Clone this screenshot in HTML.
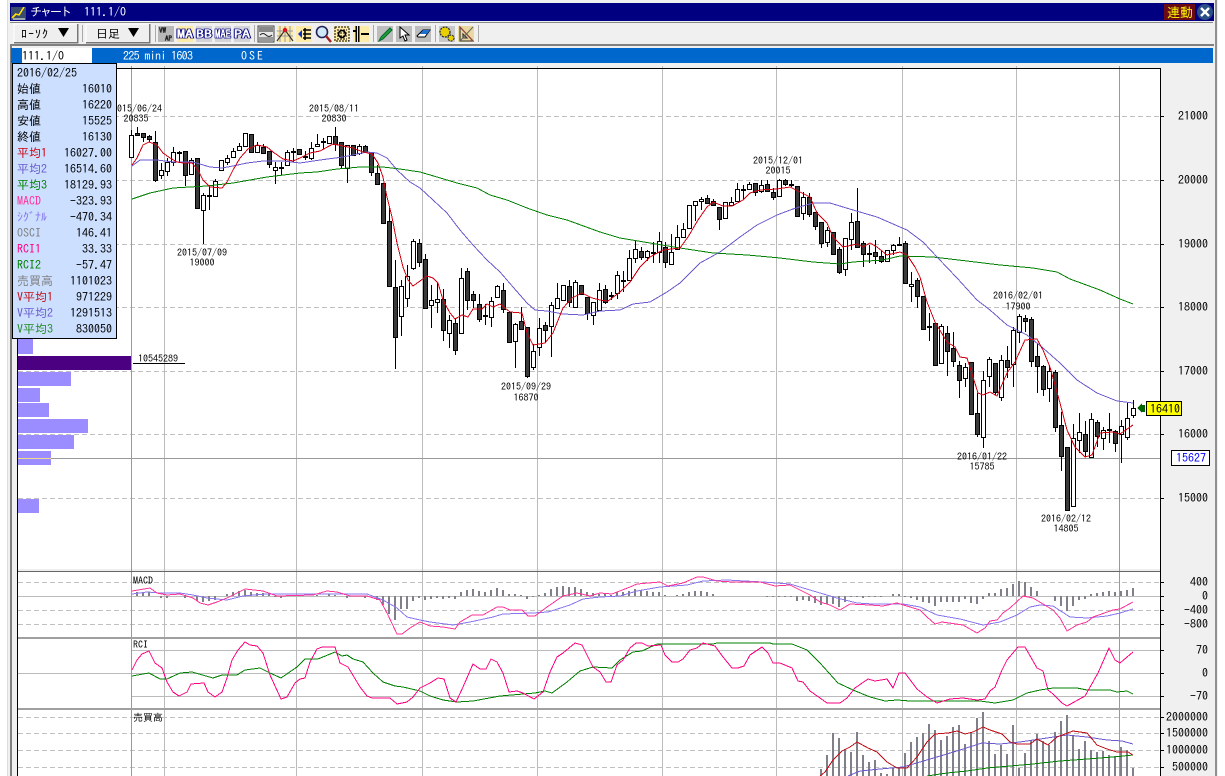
<!DOCTYPE html>
<html lang="ja"><head><meta charset="utf-8"><title>チャート</title>
<style>
html,body{margin:0;padding:0;background:#fff;width:1225px;height:776px;overflow:hidden}
svg{position:absolute;left:0;top:0;display:block}
text{font-family:"IPAGothic","Liberation Mono","Noto Sans CJK JP",monospace}
.c{shape-rendering:crispEdges}
.l{fill:none;stroke-width:1;shape-rendering:crispEdges}
</style></head><body>
<svg width="1225" height="776" viewBox="0 0 1225 776" xmlns="http://www.w3.org/2000/svg">
<!-- window frame -->
<g class="c">
<rect x="0" y="0" width="1225" height="776" fill="#fff"/>
<rect x="7" y="0" width="1211" height="776" fill="#f0f0f0"/>
<rect x="7" y="0" width="1" height="776" fill="#ddd"/>
<rect x="10" y="44" width="2" height="732" fill="#808080"/>
<rect x="1215" y="0" width="2" height="776" fill="#909090"/>
<rect x="10" y="3" width="1204" height="18" fill="#000080"/>
<rect x="10" y="22" width="1203" height="1" fill="#888"/>
<rect x="10" y="44" width="1204" height="2" fill="#808080"/>
<rect x="11" y="48" width="1202" height="15" fill="#0068cc"/>
<rect x="22" y="48" width="70" height="15" fill="#fff"/>
<rect x="18" y="68" width="1142" height="708" fill="#fff"/>
<rect x="18" y="569" width="1142" height="2" fill="#eee"/>
</g>
<!-- title -->
<g class="c">
<rect x="11" y="7" width="15" height="13" fill="#3a4a6a"/>
<path d="M12 18l4-4 3 1 5-8" fill="none" stroke="#ffe000" stroke-width="1.5"/>
<path d="M13 19h12" stroke="#fff"/>
</g>
<text x="30" y="16" font-size="12" fill="#fff" letter-spacing="-2">チャート</text>
<text x="84" y="16" font-size="12" fill="#fff">111.1/O</text>
<rect x="1164" y="4" width="31" height="16" fill="#6a0a14"/>
<text x="1167" y="17" font-size="13" fill="#ffff00">連動</text>
<circle cx="1205" cy="12" r="8" fill="#2c4f86"/>
<path d="M1201 8l8 8M1209 8l-8 8" stroke="#fff" stroke-width="2.4"/>
<!-- toolbar buttons -->
<g class="c">
<rect x="14" y="24" width="64" height="19" fill="#efefef"/>
<path d="M14 42V24H77" fill="none" stroke="#fff"/>
<path d="M77.5 24V42.5H14" fill="none" stroke="#777" stroke-width="1.5"/>
<rect x="86" y="24" width="64" height="19" fill="#efefef"/>
<path d="M86 42V24H149" fill="none" stroke="#fff"/>
<path d="M149.5 24V42.5H86" fill="none" stroke="#777" stroke-width="1.5"/>
<path d="M82.5 25V42M155.5 25V42M254.5 25V42M373.5 25V42M435.5 25V42M478.5 25V42" stroke="#aaa"/>
</g>
<text x="21" y="38" font-size="12" fill="#000" letter-spacing="1">ﾛｰｿｸ</text>
<polygon points="58,28 69,28 63.5,37" fill="#000"/>
<text x="96" y="38" font-size="12" fill="#000">日足</text>
<polygon points="128,28 139,28 133.500,37" fill="#000"/>
<!-- toolbar icons -->
<g class="c">
<rect x="158" y="26" width="16" height="16" fill="#b8b8b8"/>
<rect x="177" y="26" width="16" height="16" fill="#ffeba8"/>
<rect x="196" y="26" width="16" height="16" fill="#d4d4d8"/>
<rect x="215" y="26" width="16" height="16" fill="#d4d4d8"/>
<rect x="234" y="26" width="16" height="16" fill="#d4d4d8"/>
<rect x="258" y="26" width="16" height="16" fill="#e8e8e8" stroke="#444"/>
<rect x="259" y="27" width="14" height="5" fill="#888"/>
<rect x="259" y="37" width="14" height="4" fill="#999"/>
<rect x="277" y="26" width="16" height="16" fill="#ffeba8"/>
<rect x="296" y="26" width="16" height="16" fill="#ffeba8"/>
<rect x="315" y="26" width="16" height="16" fill="#ededed"/>
<rect x="334" y="26" width="16" height="16" fill="#ffeba8"/>
<rect x="353" y="26" width="16" height="16" fill="#ffeba8"/>
<path d="M356 26V42M358.500 26V42" stroke="#000" stroke-width="1.500"/>
<path d="M353 31H356M361 34H369" stroke="#000" stroke-width="2"/>
<rect x="377" y="26" width="16" height="16" fill="#bdbdbd"/>
<rect x="396" y="26" width="16" height="16" fill="#bdbdbd"/>
<rect x="415" y="26" width="16" height="16" fill="#bdbdbd"/>
<rect x="439" y="26" width="16" height="16" fill="#c8c8c8"/>
<rect x="458" y="26" width="16" height="16" fill="#e8d8a0"/>
</g>
<text x="159" y="33" font-size="7" font-weight="bold" fill="#fff" stroke="#222" stroke-width=".3">VW</text>
<text x="165" y="41" font-size="7" font-weight="bold" fill="#fff" stroke="#222" stroke-width=".3">AP</text>
<g font-weight="bold" fill="#fff" stroke="#000080" stroke-width="1.400" paint-order="stroke" font-size="11" lengthAdjust="spacingAndGlyphs">
<text x="177" y="38" textLength="16" lengthAdjust="spacingAndGlyphs">MA</text>
<text x="196" y="38" textLength="16" lengthAdjust="spacingAndGlyphs">BB</text>
<text x="215" y="38" textLength="16" lengthAdjust="spacingAndGlyphs">MAE</text>
<text x="234" y="38" textLength="16" lengthAdjust="spacingAndGlyphs">PA</text>
</g>
<path d="M260 35q3-3 6 0t6 0" fill="none" stroke="#222"/>
<path d="M280 26v16M285 26v16M290 26v16M277 31h16M277 36h16" stroke="#999"/>
<path d="M277 41l8-11 8 11" fill="none" stroke="#333" stroke-width="1.2"/>
<circle cx="285" cy="30" r="2.2" fill="#e01020"/>
<path d="M305 28v12M303 30h8M303 34h8M303 38h8" stroke="#000" stroke-width="1.5"/>
<path d="M298 34l4-4v8z" fill="#1030c0"/>
<circle cx="322" cy="32" r="5.5" fill="#cfe8f8" stroke="#225" stroke-width="1.6"/>
<path d="M326 36l5 6" stroke="#a02020" stroke-width="2.4"/>
<path d="M335 27h14v14h-14zM337 30h10M337 33h10M337 36h10M337 39h10" fill="none" stroke="#000" stroke-dasharray="2 1"/>
<circle cx="342" cy="34" r="3.500" fill="none" stroke="#000" stroke-width="1.600"/>
<path d="M379 41l2-4 9-9 2 2-9 9z" fill="#20a030" stroke="#063"/>
<path d="M400 27v11l3-2 2 5 2-1-2-5h4z" fill="#fff" stroke="#000"/>
<path d="M417 36l6-6h7l-5 7h-7z" fill="#fff" stroke="#000"/>
<path d="M423 30h7l-3 4h-7z" fill="#2070d0"/>
<circle cx="445" cy="32" r="5" fill="#e8d000" stroke="#333" stroke-width="1.4" stroke-dasharray="2 1"/>
<circle cx="451" cy="38" r="3" fill="#e8d000" stroke="#333" stroke-width="1.2" stroke-dasharray="2 1"/>
<path d="M460 27v14h13zM463 34v4h4z" fill="none" stroke="#333" stroke-width="1.1"/>
<path d="M460 27l13 14" stroke="#a04040"/>
<path d="M473 27L460 41" stroke="#666"/>
<!-- blue bar text -->
<text x="22" y="60" font-size="12" fill="#000">111.1/O</text>
<text x="123" y="60" font-size="12" fill="#fff" textLength="70">225 mini 1603</text>
<text x="241" y="60" font-size="12" fill="#fff" textLength="22">OSE</text>
<!-- grid -->
<g class="c" fill="none">
<path d="M18 116.500H1160M18 180.500H1160M18 244.500H1160M18 307.500H1160M18 371.500H1160M18 434.500H1160M18 498.500H1160M18 582.500H1160M18 610.500H1160M18 624.500H1160M18 717.500H1160M18 733.500H1160M18 750.500H1160M18 767.500H1160" stroke="#c0c0c0" stroke-dasharray="5 3"/>
<path d="M18 596.500H1160M131 650.500H1160M18 673.500H1160M131 696.500H1160" stroke="#bbb"/>
<path d="M164.500 66V776M296.500 66V776M422.500 66V776M537.500 66V776M662.500 66V776M776.500 66V776M902.500 66V776M1016.500 66V776" stroke="#bbb"/>
<path d="M131.500 66V776M1119.500 66V776" stroke="#999"/>
<path d="M18 458.500H1160" stroke="#999"/>
</g>
<!-- volume profile -->
<g class="c">
<rect x="18" y="339" width="15" height="15" fill="#9b8cff"/>
<rect x="18" y="356" width="113" height="14" fill="#4b0082"/>
<rect x="18" y="372" width="53" height="14" fill="#9b8cff"/>
<rect x="18" y="388" width="22" height="14" fill="#9b8cff"/>
<rect x="18" y="403" width="31" height="14" fill="#9b8cff"/>
<rect x="18" y="419" width="70" height="14" fill="#9b8cff"/>
<rect x="18" y="435" width="56" height="14" fill="#9b8cff"/>
<rect x="18" y="451" width="33" height="14" fill="#9b8cff"/>
<rect x="18" y="458" width="33" height="1" fill="#f0dc90"/>
<rect x="18" y="499" width="21" height="14" fill="#9b8cff"/>
<rect x="133" y="363" width="52" height="1" fill="#000"/>
</g>
<text x="138" y="362" font-size="10" fill="#000">10545289</text>
<!-- wicks -->
<path class="c" fill="none" stroke="#000" d="M131.500 130V157M137.500 127V135M143.500 133V142M149.500 135V142M155.500 131V182M161.500 163V179M167.500 158V176M173.500 147V166M179.500 151V162M185.500 151V186M191.500 158V175M197.500 158V208M203.500 193V244M209.500 187V210M215.500 179V197M227.500 155V165M233.500 148V157M239.500 143V150M257.500 142V152M263.500 144V153M269.500 151V168M275.500 162V184M281.500 162V175M287.500 150V165M293.500 148V162M305.500 151V160M311.500 142V160M317.500 134V146M323.500 138V149M335.500 127V151M341.500 142V168M347.500 145V183M359.500 144V155M365.500 145V152M371.500 152V176M377.500 165V185M389.500 208V286M395.500 260V369M401.500 280V336M407.500 265V307M413.500 239V270M419.500 239V267M425.500 254V308M431.500 285V328M437.500 283V313M443.500 289V341M449.500 315V348M455.500 318V355M461.500 268V333M467.500 268V310M473.500 291V308M479.500 294V322M485.500 304V325M491.500 297V327M497.500 285V298M503.500 283V313M515.500 323V368M521.500 307V329M527.500 327V378M533.500 344V370M539.500 318V356M545.500 322V343M551.500 302V357M557.500 283V308M569.500 280V307M575.500 280V307M587.500 297V320M593.500 302V325M599.500 283V310M605.500 285V304M611.500 292V300M617.500 271V299M623.500 271V292M629.500 250V280M635.500 240V263M641.500 247V260M647.500 250V261M653.500 242V263M659.500 232V263M665.500 242V268M671.500 234V264M677.500 225V249M683.500 223V237M695.500 201V221M701.500 197V210M707.500 195V203M713.500 199V205M719.500 207V230M731.500 197V205M737.500 183V201M743.500 185V200M749.500 182V189M755.500 183V196M761.500 180V193M767.500 180V192M773.500 188V200M779.500 179V197M785.500 179V186M791.500 180V187M803.500 192V220M809.500 193V217M815.500 212V230M821.500 222V248M827.500 227V247M839.500 247V274M845.500 238V276M851.500 213V250M857.500 188V247M863.500 241V267M869.500 245V263M875.500 240V264M881.500 250V263M893.500 244V255M899.500 237V245M905.500 241V284M911.500 272V302M917.500 278V308M929.500 313V341M941.500 324V363M947.500 326V376M953.500 332V367M959.500 361V398M965.500 363V387M977.500 393V437M983.500 371V448M989.500 357V387M995.500 363V395M1001.500 355V401M1007.500 346V378M1013.500 327V387M1019.500 314V343M1025.500 315V332M1031.500 317V367M1037.500 343V393M1043.500 365V396M1049.500 365V402M1055.500 370V432M1061.500 412V471M1067.500 447V511M1073.500 424V507M1079.500 413V453M1085.500 421V457M1091.500 413V458M1097.500 420V447M1103.500 427V450M1109.500 413V443M1115.500 430V452M1121.500 420V463M1127.500 403V440M1133.500 400V418"/>
<!-- white candles -->
<path class="c" fill="#fff" stroke="#000" d="M129.500 135.500h4v22h-4zM159.500 170.500h4v5h-4zM165.500 162.500h4v9h-4zM171.500 152.500h4v10h-4zM177.500 152.500h4v1h-4zM189.500 160.500h4v14h-4zM201.500 195.500h4v15h-4zM207.500 195.500h4v1h-4zM213.500 181.500h4v15h-4zM219.500 160.500h4v10h-4zM225.500 158.500h4v4h-4zM231.500 151.500h4v6h-4zM237.500 146.500h4v4h-4zM243.500 133.500h4v13h-4zM255.500 145.500h4v7h-4zM273.500 167.500h4v3h-4zM285.500 152.500h4v13h-4zM291.500 151.500h4v1h-4zM309.500 148.500h4v10h-4zM315.500 144.500h4v2h-4zM327.500 136.500h4v7h-4zM345.500 145.500h4v23h-4zM357.500 146.500h4v7h-4zM399.500 286.500h4v30h-4zM405.500 276.500h4v22h-4zM411.500 241.500h4v27h-4zM429.500 300.500h4v5h-4zM435.500 299.500h4v3h-4zM447.500 320.500h4v13h-4zM459.500 278.500h4v55h-4zM489.500 301.500h4v16h-4zM495.500 286.500h4v11h-4zM513.500 324.500h4v17h-4zM531.500 351.500h4v16h-4zM537.500 328.500h4v19h-4zM549.500 305.500h4v21h-4zM555.500 298.500h4v10h-4zM561.500 285.500h4v15h-4zM573.500 282.500h4v25h-4zM591.500 302.500h4v13h-4zM597.500 290.500h4v20h-4zM615.500 275.500h4v18h-4zM627.500 258.500h4v22h-4zM633.500 249.500h4v9h-4zM645.500 251.500h4v6h-4zM657.500 241.500h4v11h-4zM669.500 252.500h4v12h-4zM675.500 237.500h4v12h-4zM681.500 229.500h4v8h-4zM687.500 205.500h4v23h-4zM693.500 201.500h4v4h-4zM699.500 199.500h4v2h-4zM723.500 202.500h4v16h-4zM729.500 202.500h4v3h-4zM735.500 189.500h4v12h-4zM747.500 184.500h4v5h-4zM759.500 185.500h4v6h-4zM777.500 180.500h4v16h-4zM801.500 197.500h4v16h-4zM825.500 230.500h4v12h-4zM843.500 238.500h4v31h-4zM849.500 222.500h4v17h-4zM885.500 250.500h4v11h-4zM891.500 245.500h4v5h-4zM909.500 284.500h4v2h-4zM939.500 326.500h4v37h-4zM963.500 367.500h4v11h-4zM981.500 380.500h4v57h-4zM987.500 359.500h4v17h-4zM999.500 360.500h4v37h-4zM1011.500 330.500h4v34h-4zM1017.500 316.500h4v16h-4zM1047.500 371.500h4v17h-4zM1071.500 438.500h4v68h-4zM1077.500 432.500h4v8h-4zM1089.500 419.500h4v38h-4zM1101.500 430.500h4v8h-4zM1119.500 426.500h4v8h-4zM1125.500 418.500h4v19h-4zM1131.500 408.500h4v7h-4z"/>
<!-- black candles -->
<path class="c" fill="#3a3a3a" stroke="#000" d="M135.500 133.500h4v2h-4zM141.500 133.500h4v4h-4zM147.500 136.500h4v3h-4zM153.500 142.500h4v38h-4zM183.500 151.500h4v24h-4zM195.500 158.500h4v50h-4zM249.500 134.500h4v18h-4zM261.500 147.500h4v6h-4zM267.500 151.500h4v13h-4zM279.500 167.500h4v1h-4zM297.500 149.500h4v5h-4zM303.500 156.500h4v1h-4zM321.500 141.500h4v1h-4zM333.500 136.500h4v8h-4zM339.500 142.500h4v23h-4zM351.500 145.500h4v10h-4zM363.500 146.500h4v6h-4zM369.500 152.500h4v20h-4zM375.500 173.500h4v11h-4zM381.500 183.500h4v40h-4zM387.500 221.500h4v65h-4zM393.500 287.500h4v50h-4zM417.500 243.500h4v19h-4zM423.500 259.500h4v49h-4zM441.500 299.500h4v31h-4zM453.500 323.500h4v27h-4zM465.500 271.500h4v29h-4zM471.500 294.500h4v6h-4zM477.500 304.500h4v15h-4zM483.500 315.500h4v1h-4zM501.500 290.500h4v19h-4zM507.500 312.500h4v30h-4zM519.500 321.500h4v8h-4zM525.500 327.500h4v49h-4zM543.500 325.500h4v5h-4zM567.500 286.500h4v16h-4zM579.500 285.500h4v9h-4zM585.500 297.500h4v16h-4zM603.500 289.500h4v13h-4zM609.500 295.500h4v1h-4zM621.500 280.500h4v1h-4zM639.500 251.500h4v6h-4zM651.500 252.500h4v1h-4zM663.500 247.500h4v15h-4zM705.500 198.500h4v5h-4zM711.500 201.500h4v4h-4zM717.500 207.500h4v12h-4zM741.500 189.500h4v1h-4zM753.500 183.500h4v9h-4zM765.500 184.500h4v7h-4zM771.500 192.500h4v5h-4zM783.500 180.500h4v4h-4zM789.500 184.500h4v1h-4zM795.500 186.500h4v30h-4zM807.500 197.500h4v17h-4zM813.500 212.500h4v14h-4zM819.500 222.500h4v21h-4zM831.500 232.500h4v22h-4zM837.500 249.500h4v23h-4zM855.500 221.500h4v26h-4zM861.500 243.500h4v11h-4zM867.500 253.500h4v1h-4zM873.500 252.500h4v4h-4zM879.500 256.500h4v5h-4zM897.500 244.500h4v1h-4zM903.500 243.500h4v40h-4zM915.500 280.500h4v16h-4zM921.500 296.500h4v33h-4zM927.500 326.500h4v1h-4zM933.500 323.500h4v42h-4zM945.500 333.500h4v18h-4zM951.500 348.500h4v13h-4zM957.500 365.500h4v15h-4zM969.500 362.500h4v52h-4zM975.500 413.500h4v21h-4zM993.500 363.500h4v29h-4zM1005.500 360.500h4v7h-4zM1023.500 318.500h4v3h-4zM1029.500 319.500h4v42h-4zM1035.500 356.500h4v10h-4zM1041.500 366.500h4v23h-4zM1053.500 372.500h4v55h-4zM1059.500 425.500h4v31h-4zM1065.500 447.500h4v63h-4zM1083.500 434.500h4v17h-4zM1095.500 422.500h4v14h-4zM1107.500 429.500h4v1h-4zM1113.500 431.500h4v12h-4z"/>
<!-- moving averages -->
<polyline class="l" stroke="#008000" points="132,199 150,193 173,188 207,186 233,183 267,177 300,173 317,172 337,169 360,167 383,167 400,169 420,172 437,177 457,183 477,188 490,195 507,200 527,208 547,215 567,220 600,232 620,238 650,243 680,248 713,253 747,255 780,258 813,262 840,264 853,262 883,260 900,256 933,257 967,261 1000,265 1033,268 1057,272 1070,279 1100,290 1120,299 1133,304"/>
<polyline class="l" stroke="#6a5acd" points="132,166 140,160 157,160 173,162 193,162 210,167 222,168 233,166 247,163 263,161 283,161 300,163 320,160 343,157 367,152 377,153 387,158 397,170 410,182 420,188 433,200 447,213 460,230 473,245 487,260 500,272 513,287 527,303 535,310 547,311 563,314 583,315 600,311 620,310 633,304 650,302 667,292 680,283 700,263 720,252 740,237 757,225 777,215 793,209 813,203 830,203 853,210 877,217 900,227 907,230 923,242 938,258 957,278 977,300 990,310 1007,325 1027,335 1043,348 1060,363 1077,380 1097,393 1117,401 1133,403"/>
<polyline class="l" stroke="#d00010" points="132,165 137,158 143,145 149,142 157,145 163,153 170,158 177,162 183,163 192,163 198,170 203,180 210,187 222,188 227,182 233,170 240,158 248,149 257,145 267,147 273,152 283,159 293,161 300,158 310,153 320,151 333,144 343,146 353,148 363,152 372,154 378,163 383,177 387,197 392,217 397,243 403,267 408,280 413,286 420,281 427,276 433,278 438,283 443,300 450,313 455,319 462,315 468,317 473,309 482,309 487,304 493,307 500,304 510,312 522,313 527,333 533,345 545,343 553,333 563,308 572,298 582,293 592,298 600,300 608,301 620,292 630,282 640,267 650,257 663,250 680,248 688,237 698,220 707,207 713,202 723,206 732,206 743,200 750,193 760,190 777,189 790,187 800,192 810,197 817,213 827,223 833,237 843,247 857,244 863,247 870,243 877,247 887,255 900,252 907,255 915,267 920,277 927,302 935,322 947,342 955,347 960,357 967,358 973,377 978,393 983,395 990,392 997,396 1007,373 1015,362 1025,340 1037,339 1043,350 1050,367 1060,403 1067,430 1075,447 1085,457 1092,455 1100,433 1113,432 1120,434 1133,425"/>
<!-- labels -->
<g font-size="10" fill="#000" text-anchor="middle">
<text x="137" y="112">2015/06/24</text><text x="136" y="122">20835</text>
<text x="202" y="256">2015/07/09</text><text x="202" y="266">19000</text>
<text x="334" y="112">2015/08/11</text><text x="334" y="122">20830</text>
<text x="778" y="164">2015/12/01</text><text x="778" y="174">20015</text>
<text x="526" y="390">2015/09/29</text><text x="526" y="401">16870</text>
<text x="1018" y="299">2016/02/01</text><text x="1018" y="310">17900</text>
<text x="982" y="460">2016/01/22</text><text x="982" y="470">15785</text>
<text x="1066" y="522">2016/02/12</text><text x="1066" y="532">14805</text>
</g>
<!-- indicator panel separators -->
<g class="c">
<rect x="18" y="571" width="1142" height="1" fill="#666"/>
<rect x="18" y="637" width="1142" height="2" fill="#a0a0a0"/>
<rect x="18" y="708" width="1142" height="2" fill="#a0a0a0"/>
</g>
<text x="133" y="584" font-size="10" fill="#000">MACD</text>
<text x="133" y="648" font-size="10" fill="#000">RCI</text>
<text x="133" y="721" font-size="10" fill="#000">売買高</text>
<!-- MACD histogram -->
<path class="c" fill="none" stroke="#80808a" stroke-width="2" d="M137 596v-4M143 596v-3M149 596v-4M161 596v2M167 596v2M185 596v2M197 596v5M203 596v6M209 596v5M215 596v4M227 596v-2M233 596v-4M239 596v-5M245 596v-6M251 596v-4M257 596v-3M263 596v-3M269 596v-2M275 596v1M281 596v2M317 596v-1M329 596v-2M335 596v-1M347 596v2M365 596v2M377 596v4M383 596v9M389 596v18M395 596v24M401 596v13M407 596v13M413 596v5M419 596v2M425 596v4M431 596v3M437 596v2M443 596v3M449 596v2M455 596v3M461 596v-4M467 596v-6M473 596v-7M479 596v-5M485 596v-4M491 596v-6M497 596v-8M503 596v-6M509 596v-2M515 596v-2M521 596v-1M527 596v3M533 596v1M539 596v-1M545 596v-3M551 596v-7M557 596v-9M563 596v-10M569 596v-9M575 596v-9M581 596v-7M587 596v-4M593 596v-3M599 596v-2M605 596v-2M611 596v-1M617 596v-4M623 596v-4M629 596v-5M635 596v-7M641 596v-6M647 596v-5M653 596v-4M659 596v-4M665 596v-1M677 596v-1M683 596v-2M689 596v-4M695 596v-5M701 596v-5M707 596v-4M713 596v-2M767 596v1M773 596v1M779 596v1M785 596v1M791 596v1M797 596v5M803 596v4M809 596v5M815 596v7M821 596v9M827 596v8M833 596v8M839 596v11M845 596v6M851 596v1M857 596v1M863 596v2M869 596v1M875 596v1M881 596v1M893 596v-2M899 596v-2M905 596v1M911 596v2M917 596v4M923 596v6M929 596v7M935 596v10M941 596v6M947 596v6M953 596v6M959 596v6M965 596v3M971 596v7M977 596v8M983 596v3M989 596v-3M995 596v-3M1001 596v-7M1007 596v-8M1013 596v-12M1019 596v-15M1025 596v-14M1031 596v-9M1037 596v-5M1055 596v5M1061 596v10M1067 596v15M1073 596v10M1079 596v4M1085 596v3M1091 596v-2M1097 596v-3M1103 596v-4M1109 596v-5M1115 596v-4M1121 596v-5M1127 596v-6M1133 596v-8"/>
<polyline class="l" stroke="#8877ee" points="132,594 147,592 160,593 180,593 193,595 207,598 227,600 243,596 267,594 367,594 383,600 397,608 407,617 420,620 430,622 453,625 470,622 493,617 503,614 533,613 548,612 570,605 583,599 600,597 620,596 637,591 660,587 687,585 703,581 727,580 763,582 790,584 820,593 837,598 857,603 873,604 903,604 920,607 937,615 960,619 983,625 1000,622 1017,615 1030,607 1040,605 1053,606 1070,617 1087,618 1107,616 1120,613 1133,609"/>
<polyline class="l" stroke="#ff3399" points="132,591 150,588 157,593 167,595 180,594 193,598 200,603 208,605 217,602 227,598 237,593 245,589 263,591 277,596 313,595 327,591 337,592 350,596 367,596 380,600 388,615 397,634 402,634 410,628 420,622 430,626 443,627 455,629 460,622 472,615 483,615 497,607 503,607 510,610 522,610 528,616 535,616 547,607 563,596 577,593 590,596 600,593 612,594 630,587 637,584 660,582 668,586 683,583 697,577 703,577 717,581 733,582 760,582 775,586 790,585 800,590 810,595 820,602 830,605 840,610 850,604 870,605 883,606 897,603 910,607 920,610 927,617 935,624 942,622 963,625 977,633 985,628 990,621 997,620 1003,613 1010,608 1023,596 1033,598 1043,604 1053,610 1060,618 1067,631 1077,625 1087,622 1093,617 1113,610 1120,609 1133,602"/>
<!-- RCI -->
<polyline class="l" stroke="#008000" points="132,676 143,674 149,673 160,679 167,679 180,673 192,672 213,678 222,675 237,675 245,670 260,668 270,673 281,678 297,667 305,659 318,659 335,652 342,656 347,655 353,659 363,662 373,673 383,682 395,686 403,687 420,691 430,696 443,700 457,702 473,701 500,696 535,693 545,691 552,693 567,682 580,671 593,667 612,668 620,660 633,652 642,651 657,644 713,644 717,643 770,643 773,644 792,644 807,650 820,663 838,683 853,690 870,697 885,701 897,700 910,701 980,701 995,703 1013,700 1027,693 1040,690 1053,688 1077,688 1087,690 1110,690 1117,692 1127,691 1133,694"/>
<polyline class="l" stroke="#ff0080" points="132,670 137,660 142,654 149,651 155,663 162,668 167,682 173,692 179,696 187,692 191,684 204,683 208,692 215,697 222,692 227,678 232,660 238,650 245,642 250,645 257,646 263,653 270,675 281,699 287,697 295,683 300,679 305,678 310,662 317,649 322,647 335,647 340,663 348,667 360,687 367,696 372,698 390,698 397,704 407,702 413,697 420,688 430,683 438,678 444,679 450,698 456,702 463,687 473,664 480,669 486,669 491,659 497,662 503,673 509,692 517,691 523,693 534,699 543,692 550,672 557,657 563,653 575,643 582,645 593,667 600,672 606,682 611,682 617,665 623,660 630,648 636,643 642,643 648,646 661,645 665,655 672,662 678,662 683,659 690,650 697,648 703,643 715,646 723,657 732,668 738,668 744,666 750,655 762,647 768,653 773,663 780,663 792,668 798,681 803,682 810,691 820,698 827,703 840,703 847,698 855,688 868,679 875,681 887,679 893,688 899,673 905,673 917,689 927,697 937,703 950,699 963,698 977,700 985,699 990,691 995,687 1002,670 1007,660 1018,647 1025,647 1037,668 1043,671 1048,690 1053,694 1062,703 1067,706 1085,696 1098,673 1109,648 1115,660 1120,663 1133,652"/>
<!-- volume -->
<path class="c" fill="none" stroke="#80808a" stroke-width="2" d="M821 769V776M827 755V776M833 733V776M839 738V776M845 749V776M851 752V776M857 732V776M863 755V776M869 762V776M875 760V776M881 773V776M887 774V776M893 768V776M899 767V776M905 753V776M911 742V776M917 737V776M923 733V776M929 724V776M935 730V776M941 740V776M947 736V776M953 727V776M959 725V776M965 744V776M971 733V776M977 718V776M983 712V776M989 741V776M995 754V776M1001 745V776M1007 754V776M1013 725V776M1019 768V776M1025 753V776M1031 741V776M1037 734V776M1043 741V776M1049 745V776M1055 732V776M1061 721V776M1067 715V776M1073 735V776M1079 749V776M1085 741V776M1091 750V776M1097 752V776M1103 751V776M1109 755V776M1115 756V776M1121 747V776M1127 750V776M1133 768V776"/>
<polyline class="l" stroke="#008000" points="927,776 947,773 967,771 987,768 1010,766 1033,764 1060,761 1087,759 1113,757 1133,755"/>
<polyline class="l" stroke="#6a5acd" points="848,776 860,771 880,769 903,767 920,762 937,757 960,750 982,743 1000,744 1020,742 1047,738 1067,735 1087,737 1107,740 1122,741 1133,744"/>
<polyline class="l" stroke="#c01018" points="820,776 825,772 833,760 842,751 850,747 857,742 868,748 877,752 887,762 897,768 907,768 917,757 927,742 935,734 948,733 957,731 965,734 973,732 983,727 990,730 1002,734 1010,742 1017,744 1030,744 1037,739 1048,745 1057,737 1073,731 1087,733 1097,745 1107,749 1117,752 1128,752 1133,755"/>
<!-- axis -->
<g class="c">
<rect x="17" y="68" width="1144" height="1" fill="#000"/>
<rect x="17" y="68" width="1" height="708" fill="#000"/>
<rect x="1160" y="68" width="1" height="708" fill="#000"/>
<path stroke="#000" d="M1161 116.500h3M1161 180.500h3M1161 244.500h3M1161 307.500h3M1161 371.500h3M1161 434.500h3M1161 498.500h3M1161 582.500h3M1161 596.500h3M1161 610.500h3M1161 624.500h3M1161 650.500h3M1161 673.500h3M1161 696.500h3M1161 717.500h3M1161 733.500h3M1161 750.500h3M1161 767.500h3"/>
</g>
<g font-size="12" fill="#000" text-anchor="end">
<text x="1208" y="120">21000</text><text x="1208" y="184">20000</text><text x="1208" y="248">19000</text><text x="1208" y="311">18000</text><text x="1208" y="375">17000</text><text x="1208" y="438">16000</text><text x="1208" y="502">15000</text>
<text x="1208" y="586">400</text><text x="1208" y="600">0</text><text x="1208" y="614">−400</text><text x="1208" y="628">−800</text>
<text x="1208" y="654">70</text><text x="1208" y="677">0</text><text x="1208" y="700">−70</text>
<text x="1208" y="721">2000000</text><text x="1208" y="737">1500000</text><text x="1208" y="754">1000000</text><text x="1208" y="771">500000</text>
</g>
<!-- price tags -->
<polygon class="c" points="1137,408 1142,403 1142,405 1145,405 1145,412 1142,412 1142,413" fill="#006400"/>
<rect class="c" x="1146.500" y="401.500" width="35" height="14" fill="#ffff00" stroke="#000"/>
<text x="1150" y="413" font-size="12" fill="#000">16410</text>
<rect class="c" x="1171.500" y="450.500" width="38" height="15" fill="#fff" stroke="#000"/>
<text x="1176" y="462" font-size="12" fill="#0000ff">15627</text>
<!-- info box -->
<rect class="c" x="12.500" y="63.500" width="104" height="275" fill="#ccdfff" stroke="#000"/>
<g font-size="12">
<text x="17" y="77" fill="#000">2016/02/25</text>
<text x="17" y="93" fill="#000">始値</text><text x="112" y="93" text-anchor="end" fill="#000">16010</text>
<text x="17" y="109" fill="#000">高値</text><text x="112" y="109" text-anchor="end" fill="#000">16220</text>
<text x="17" y="125" fill="#000">安値</text><text x="112" y="125" text-anchor="end" fill="#000">15525</text>
<text x="17" y="141" fill="#000">終値</text><text x="112" y="141" text-anchor="end" fill="#000">16130</text>
<text x="17" y="157" fill="#d00010">平均1</text><text x="112" y="157" text-anchor="end" fill="#000">16027.00</text>
<text x="17" y="173" fill="#6a5acd">平均2</text><text x="112" y="173" text-anchor="end" fill="#000">16514.60</text>
<text x="17" y="189" fill="#008000">平均3</text><text x="112" y="189" text-anchor="end" fill="#000">18129.93</text>
<text x="17" y="205" fill="#ff3399">MACD</text><text x="112" y="205" text-anchor="end" fill="#000">−323.93</text>
<text x="17" y="221" fill="#8877ee">ｼｸﾞﾅﾙ</text><text x="112" y="221" text-anchor="end" fill="#000">−470.34</text>
<text x="17" y="237" fill="#808080">OSCI</text><text x="112" y="237" text-anchor="end" fill="#000">146.41</text>
<text x="17" y="253" fill="#ff0080">RCI1</text><text x="112" y="253" text-anchor="end" fill="#000">33.33</text>
<text x="17" y="269" fill="#008000">RCI2</text><text x="112" y="269" text-anchor="end" fill="#000">−57.47</text>
<text x="17" y="285" fill="#808080">売買高</text><text x="112" y="285" text-anchor="end" fill="#000">1101023</text>
<text x="17" y="301" fill="#c01018">V平均1</text><text x="112" y="301" text-anchor="end" fill="#000">971229</text>
<text x="17" y="317" fill="#6a5acd">V平均2</text><text x="112" y="317" text-anchor="end" fill="#000">1291513</text>
<text x="17" y="333" fill="#228b22">V平均3</text><text x="112" y="333" text-anchor="end" fill="#000">830050</text>
</g>
</svg>
</body></html>
